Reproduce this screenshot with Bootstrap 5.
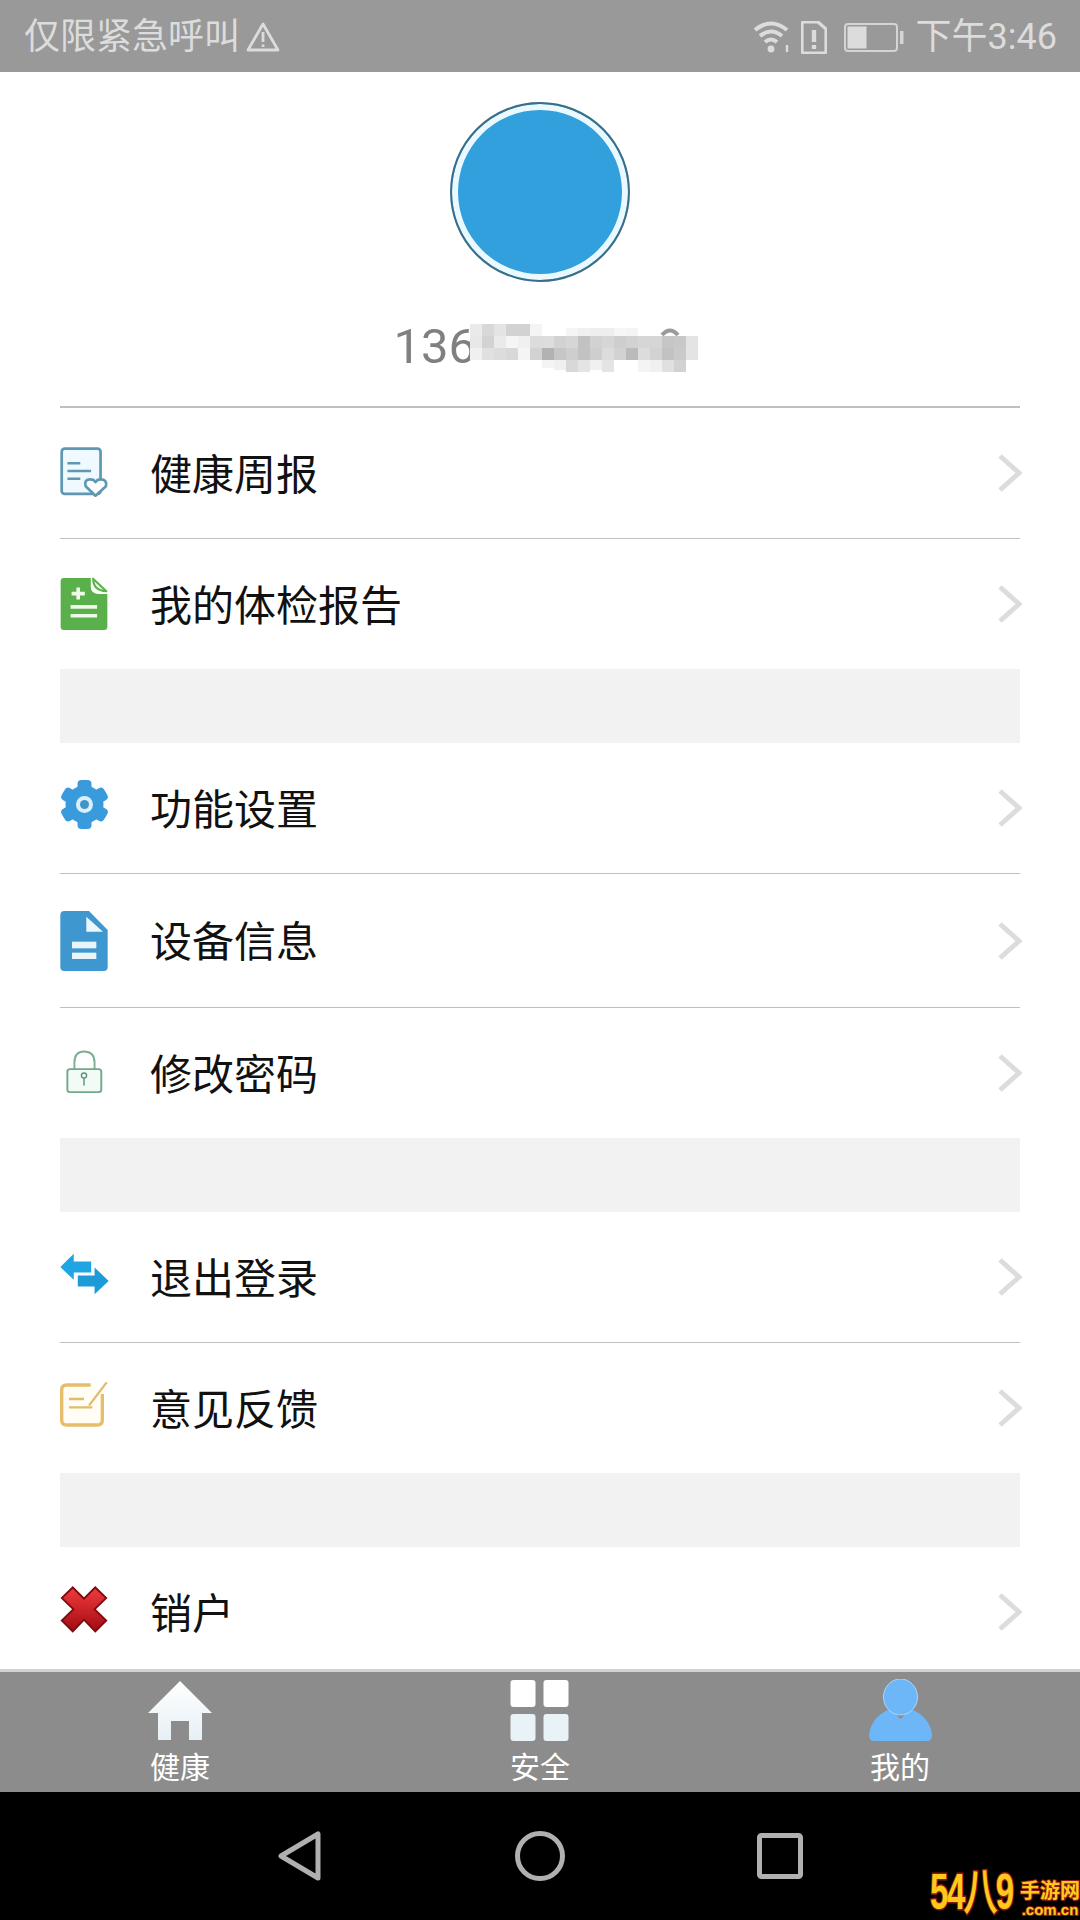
<!DOCTYPE html>
<html lang="zh-CN">
<head>
<meta charset="utf-8">
<title>我的</title>
<link href="https://cdn.jsdelivr.net/npm/bootstrap@5.3.0/dist/css/bootstrap.min.css" rel="stylesheet">
<style>
html,body{width:1080px;height:1920px;overflow:hidden}
body{font-family:Roboto,"Noto Sans CJK SC",sans-serif;background:#fff;color:#111}
.shell{height:1920px;position:relative}
.sysbar{height:72px;background:#999;color:#dcdcdc;font-size:36px;font-weight:400;padding:2px 23px 0 24px;flex:none;line-height:1}
.sysbar svg{display:block}
.warn{margin-left:6px}
.wifi{margin-right:9px}
.sim{margin-right:17px}
.batt{margin-right:12px}
.profile{height:334px;padding-top:30px;flex:none}
.avatar{width:180px;height:180px;border-radius:50%;background:#31a0dc;border:2px solid #3a6d88;box-shadow:inset 0 0 0 6px #e9f9ff}
.phone-box{width:303px;height:56px;margin:37px auto 0;position:relative;font-family:Roboto,sans-serif;font-size:49px;line-height:56px;color:#808080;left:5px}
.mosaic{position:absolute;left:76px;top:5px}
.menu{margin:0 60px;flex:1 1 auto;border-top:2px solid #c0c0c0}
.item{background:transparent;border:0;border-bottom:2px solid #c0c0c0;padding:0;height:131px;font-size:42px;color:#111;line-height:1;border-radius:0}
.item-end{border-bottom:0;height:130px}
.item-wide{height:134px}
.item-last{height:122px;padding-top:8px}
.gap-band{height:74px;background:#f2f2f2}
.ico-slot{width:48px;margin-right:42px;flex:none}
.ico-slot svg{display:block;overflow:visible}
.up1{margin-bottom:3px}
.up2{margin-bottom:7px}
.up3{margin-bottom:10px}
.up4{margin-bottom:6px}
.label-t{padding-top:5px}
.chev{margin-left:auto;margin-right:-2px;flex:none}
.tabline{height:3px;background:#d2d2d2;flex:none}
.tabs{height:120px;background:#8c8c8c;color:#fff;font-size:30px;line-height:1;flex:none}
.tab-cell{width:360px;padding-top:7px}
.tab-ico{height:63px}
.tab-ico svg{display:block}
.tab-txt{margin-top:11px}
.navkeys{height:128px;background:#000;flex:none}
.nav-slot{width:240px}
.wm{position:absolute;right:0;bottom:2px;height:54px;color:#ffc91a;font-family:"Liberation Sans",sans-serif;font-weight:700;line-height:1}
.wm-box{width:90px;height:52px;overflow:visible}
.wm-big{display:inline-block;font-size:50px;line-height:52px;letter-spacing:-2px;transform:scaleX(.66);transform-origin:left center;white-space:nowrap;-webkit-text-stroke:3px #8a1a12;paint-order:stroke fill}
.wm-side{width:60px}
.wm-cn{font-family:"Noto Sans CJK SC",sans-serif;font-size:20px;line-height:22px;-webkit-text-stroke:2px #8a1a12;paint-order:stroke fill}
.wm-url{font-size:15px;line-height:17px;white-space:nowrap;-webkit-text-stroke:2px #8a1a12;paint-order:stroke fill}
</style>
</head>
<body>
<div class="shell d-flex flex-column">

  <div class="sysbar d-flex align-items-center">
    <span>仅限紧急呼叫</span>
    <svg class="warn" width="34" height="30" viewBox="0 0 34 30" fill="none" stroke="#dcdcdc" stroke-width="2.8"><path d="M17 2 L32 28 H2 Z" stroke-linejoin="round"/><path d="M17 10V20M17 22.5V25"/></svg>
    <div class="ms-auto d-flex align-items-center">
      <svg class="wifi" width="38" height="33" viewBox="0 0 38 33" fill="none" stroke="#dcdcdc" stroke-width="4"><path d="M1 9 Q17 -4 33 9"/><path d="M6 15 Q17 6 28 15"/><path d="M11 21 Q17 16 23 21"/><circle cx="17" cy="28" r="3.4" fill="#dcdcdc" stroke="none"/><path d="M33 24V31" stroke-width="2.4"/></svg>
      <svg class="sim" width="26" height="33" viewBox="0 0 26 33"><path d="M3 1 H17 L25 8 V30 Q25 32 23 32 H3 Q1 32 1 30 V3 Q1 1 3 1Z" fill="none" stroke="#dcdcdc" stroke-width="3.2"/><path d="M13 9V21M13 24V28" stroke="#dcdcdc" stroke-width="4.4"/></svg>
      <svg class="batt" width="60" height="29" viewBox="0 0 60 29"><rect x="1" y="1" width="52" height="27" rx="3" fill="none" stroke="#d4d4d4" stroke-width="2"/><rect x="3.5" y="3.5" width="19" height="22" fill="#dcdcdc"/><rect x="56" y="8" width="3.5" height="13" fill="#d4d4d4"/></svg>
      <span>下午3:46</span>
    </div>
  </div>

  <section class="profile text-center">
    <div class="avatar mx-auto"></div>
    <div class="phone-box text-start">136
      <svg class="mosaic" width="228" height="48" viewBox="0 0 228 48">
        <g shape-rendering="crispEdges">
        <rect x="0" y="0" width="12" height="12" fill="#eaeaea"/><rect x="12" y="0" width="12" height="12" fill="#d8d8d8"/><rect x="24" y="0" width="12" height="12" fill="#e4e4e4"/><rect x="36" y="0" width="12" height="12" fill="#d2d2d2"/><rect x="48" y="0" width="12" height="12" fill="#d2d2d2"/><rect x="60" y="0" width="12" height="12" fill="#f4f4f4"/><rect x="96" y="4" width="12" height="8" fill="#f5f5f5"/><rect x="108" y="4" width="12" height="8" fill="#f0f0f0"/><rect x="120" y="4" width="12" height="8" fill="#eeeeee"/><rect x="132" y="4" width="12" height="8" fill="#eeeeee"/><rect x="144" y="4" width="12" height="8" fill="#f6f6f6"/><rect x="156" y="4" width="12" height="8" fill="#f4f4f4"/>
        <rect x="0" y="12" width="12" height="12" fill="#e8e8e8"/><rect x="12" y="12" width="12" height="12" fill="#d2d2d2"/><rect x="24" y="12" width="12" height="12" fill="#eaeaea"/><rect x="36" y="12" width="12" height="12" fill="#f5f5f5"/><rect x="48" y="12" width="12" height="12" fill="#f0f0f0"/><rect x="60" y="12" width="12" height="12" fill="#dcdcdc"/><rect x="72" y="12" width="12" height="12" fill="#dddddd"/><rect x="84" y="12" width="12" height="12" fill="#d2d2d2"/><rect x="96" y="12" width="12" height="12" fill="#d6d6d6"/><rect x="108" y="12" width="12" height="12" fill="#c2c2c2"/><rect x="120" y="12" width="12" height="12" fill="#d2d2d2"/><rect x="132" y="12" width="12" height="12" fill="#d6d6d6"/><rect x="144" y="12" width="12" height="12" fill="#cecece"/><rect x="156" y="12" width="12" height="12" fill="#d2d2d2"/><rect x="168" y="12" width="12" height="12" fill="#d6d6d6"/><rect x="180" y="12" width="12" height="12" fill="#d6d6d6"/><rect x="192" y="12" width="12" height="12" fill="#c6c6c6"/><rect x="204" y="12" width="12" height="12" fill="#c8c8c8"/><rect x="216" y="12" width="12" height="12" fill="#e4e4e4"/>
        <rect x="0" y="24" width="12" height="12" fill="#f0f0f0"/><rect x="12" y="24" width="12" height="12" fill="#e0e0e0"/><rect x="24" y="24" width="12" height="12" fill="#dcdcdc"/><rect x="36" y="24" width="12" height="12" fill="#d8d8d8"/><rect x="48" y="24" width="12" height="12" fill="#f5f5f5"/><rect x="60" y="24" width="12" height="12" fill="#d2d2d2"/><rect x="72" y="24" width="12" height="12" fill="#b2b2b2"/><rect x="84" y="24" width="12" height="12" fill="#c6c6c6"/><rect x="96" y="24" width="12" height="12" fill="#cecece"/><rect x="108" y="24" width="12" height="12" fill="#c2c2c2"/><rect x="120" y="24" width="12" height="12" fill="#cecece"/><rect x="132" y="24" width="12" height="12" fill="#dcdcdc"/><rect x="144" y="24" width="12" height="12" fill="#d2d2d2"/><rect x="156" y="24" width="12" height="12" fill="#bababa"/><rect x="168" y="24" width="12" height="12" fill="#dcdcdc"/><rect x="180" y="24" width="12" height="12" fill="#d2d2d2"/><rect x="192" y="24" width="12" height="12" fill="#c2c2c2"/><rect x="204" y="24" width="12" height="12" fill="#cacaca"/><rect x="216" y="24" width="12" height="12" fill="#e4e4e4"/>
        <rect x="72" y="36" width="12" height="8" fill="#f4f4f4"/><rect x="84" y="36" width="12" height="10" fill="#f0f0f0"/><rect x="96" y="36" width="12" height="12" fill="#d8d8d8"/><rect x="108" y="36" width="12" height="12" fill="#e4e4e4"/><rect x="120" y="36" width="12" height="10" fill="#f0f0f0"/><rect x="132" y="36" width="12" height="12" fill="#e4e4e4"/><rect x="168" y="36" width="12" height="12" fill="#f4f4f4"/><rect x="180" y="36" width="12" height="12" fill="#f0f0f0"/><rect x="192" y="36" width="12" height="12" fill="#e0e0e0"/><rect x="204" y="36" width="12" height="12" fill="#d2d2d2"/>
        </g>
        <path d="M192 11 Q200 2 208 11" fill="none" stroke="#9a9a9a" stroke-width="4"/>
      </svg>
    </div>
  </section>

  <div class="menu">
    <div class="list-group list-group-flush">
      <div class="list-group-item item d-flex align-items-center">
        <div class="ico-slot"><svg class="up1" width="48" height="49" viewBox="60 74 142 145"><rect x="65" y="79" width="115" height="134" rx="9" fill="#eefaff" stroke="#6098b4" stroke-width="8"/><path d="M82 122H120M82 145H152M82 168H120" stroke="#6098b0" stroke-width="7" fill="none"/><path d="M165 218 L136 190 Q130 170 150 170 Q160 170 165 178 Q170 170 180 170 Q200 170 196 190Z" fill="#fff" stroke="#6098b4" stroke-width="8" stroke-linejoin="round"/></svg></div>
        <span class="label-t">健康周报</span>
        <svg class="chev" width="24" height="38" viewBox="0 0 24 38" fill="none" stroke="#dcdcdc" stroke-width="5"><path d="M2 2 L21 19 L2 36"/></svg>
      </div>
      <div class="list-group-item item item-end d-flex align-items-center">
        <div class="ico-slot"><svg width="48" height="52" viewBox="62 468 141 157"><path d="M72 468H153 V495 Q153 516 178 516 H203 V615 Q203 625 193 625 H72 Q62 625 62 615 V478 Q62 468 72 468Z" fill="#5ab04a"/><path d="M160 470 Q160 505 200 508 Z" fill="#e9f7e0" stroke="#5ab04a" stroke-width="6" stroke-linejoin="round"/><path d="M115 497V533M95 515H135M92 555H172M92 582H172" stroke="#eef9e8" stroke-width="11" fill="none"/></svg></div>
        <span class="label-t">我的体检报告</span>
        <svg class="chev" width="24" height="38" viewBox="0 0 24 38" fill="none" stroke="#dcdcdc" stroke-width="5"><path d="M2 2 L21 19 L2 36"/></svg>
      </div>
    </div>
    <div class="gap-band"></div>
    <div class="list-group list-group-flush">
      <div class="list-group-item item d-flex align-items-center">
        <div class="ico-slot"><svg class="up2" width="49" height="49" viewBox="-24.5 -24.5 49 49"><g fill="#3a9bdc"><circle r="19"/><rect x="-7" y="-24.5" width="14" height="49" rx="4"/><rect x="-7" y="-24.5" width="14" height="49" rx="4" transform="rotate(60)"/><rect x="-7" y="-24.5" width="14" height="49" rx="4" transform="rotate(120)"/></g><circle r="8.5" fill="#dceef8"/><circle r="4.5" fill="#3f94c8"/></svg></div>
        <span class="label-t">功能设置</span>
        <svg class="chev" width="24" height="38" viewBox="0 0 24 38" fill="none" stroke="#dcdcdc" stroke-width="5"><path d="M2 2 L21 19 L2 36"/></svg>
      </div>
      <div class="list-group-item item item-wide d-flex align-items-center">
        <div class="ico-slot"><svg width="48" height="60" viewBox="62 453 142 180"><path d="M74 453H148 L204 510 V621 Q204 633 192 633 H74 Q62 633 62 621 V465 Q62 453 74 453Z" fill="#3f97d0"/><path d="M140 470V515H190Z" fill="#eaf7fd"/><rect x="97" y="545" width="73" height="20" fill="#e8f6fc"/><rect x="97" y="578" width="73" height="19" fill="#e8f6fc"/></svg></div>
        <span class="label-t">设备信息</span>
        <svg class="chev" width="24" height="38" viewBox="0 0 24 38" fill="none" stroke="#dcdcdc" stroke-width="5"><path d="M2 2 L21 19 L2 36"/></svg>
      </div>
      <div class="list-group-item item item-end d-flex align-items-center">
        <div class="ico-slot"><svg class="up1" width="48" height="44" viewBox="60 868 150 132"><path d="M105 925V905 Q105 870 135 870 Q168 870 168 905V925" fill="none" stroke="#7fae95" stroke-width="6"/><rect x="83" y="925" width="106" height="72" rx="8" fill="#f3fbf7" stroke="#72a88b" stroke-width="6"/><circle cx="135" cy="945" r="8" fill="none" stroke="#5f9479" stroke-width="4.5"/><path d="M135 953V976" stroke="#5f9479" stroke-width="4.5"/></svg></div>
        <span class="label-t">修改密码</span>
        <svg class="chev" width="24" height="38" viewBox="0 0 24 38" fill="none" stroke="#dcdcdc" stroke-width="5"><path d="M2 2 L21 19 L2 36"/></svg>
      </div>
    </div>
    <div class="gap-band"></div>
    <div class="list-group list-group-flush">
      <div class="list-group-item item d-flex align-items-center">
        <div class="ico-slot"><svg class="up2" width="49" height="42" viewBox="62 70 146 125"><path d="M63 112L103 72V95H155V128H103V150Z" fill="#1fa6e2"/><path d="M207 153L165 113V137H115V170H165V193Z" fill="#1c9bd8"/></svg></div>
        <span class="label-t">退出登录</span>
        <svg class="chev" width="24" height="38" viewBox="0 0 24 38" fill="none" stroke="#dcdcdc" stroke-width="5"><path d="M2 2 L21 19 L2 36"/></svg>
      </div>
      <div class="list-group-item item item-end d-flex align-items-center">
        <div class="ico-slot"><svg class="up3" width="48" height="47" viewBox="78 448 144 141"><path d="M170 463H98 Q83 463 83 478V568 Q83 583 98 583H190 Q205 583 205 568V490" fill="#fffdf4" stroke="#e6bd6a" stroke-width="10"/><path d="M105 505H150M105 530H175" stroke="#e3ba6e" stroke-width="7" fill="none"/><path d="M165 525L218 455" stroke="#e3ba6e" stroke-width="7" fill="none"/></svg></div>
        <span class="label-t">意见反馈</span>
        <svg class="chev" width="24" height="38" viewBox="0 0 24 38" fill="none" stroke="#dcdcdc" stroke-width="5"><path d="M2 2 L21 19 L2 36"/></svg>
      </div>
    </div>
    <div class="gap-band"></div>
    <div class="list-group list-group-flush">
      <div class="list-group-item item item-end item-last d-flex align-items-center">
        <div class="ico-slot"><svg class="up4" width="48" height="48" viewBox="62 1063 144 145"><defs><linearGradient id="redx" x1="0" y1="0" x2="0" y2="1"><stop offset="0" stop-color="#ee3a3c"/><stop offset="1" stop-color="#a50c14"/></linearGradient></defs><path d="M100 1066L134 1100L168 1066L205 1102L170 1136L205 1170L168 1207L134 1172L100 1207L63 1170L98 1136L63 1102Z" fill="#7d0a0e"/><path d="M100 1074L134 1108L168 1074L197 1102L162 1136L197 1170L168 1199L134 1164L100 1199L71 1170L106 1136L71 1102Z" fill="url(#redx)"/></svg></div>
        <span class="label-t">销户</span>
        <svg class="chev" width="24" height="38" viewBox="0 0 24 38" fill="none" stroke="#dcdcdc" stroke-width="5"><path d="M2 2 L21 19 L2 36"/></svg>
      </div>
    </div>
  </div>

  <div class="tabline"></div>
  <nav class="tabs d-flex justify-content-center">
    <div class="tab-cell d-flex flex-column align-items-center">
      <div class="tab-ico d-flex align-items-center"><svg width="64" height="59" viewBox="0 0 64 59"><defs><linearGradient id="hs" x1="0" y1="0" x2="0" y2="1"><stop offset="0" stop-color="#fff"/><stop offset="1" stop-color="#e6f0f5"/></linearGradient></defs><path d="M32 0 L64 32 H54 V59 H41 V40 H23 V59 H10 V32 H0Z" fill="url(#hs)"/></svg></div>
      <span class="tab-txt">健康</span>
    </div>
    <div class="tab-cell d-flex flex-column align-items-center">
      <div class="tab-ico d-flex align-items-center"><svg width="60" height="61" viewBox="0 0 60 61"><rect x="0.5" y="0" width="25" height="27" rx="3" fill="#fff"/><rect x="33.5" y="0" width="25" height="27" rx="3" fill="#fff"/><rect x="0.5" y="34" width="25" height="27" rx="3" fill="#e9f2f6"/><rect x="33.5" y="34" width="25" height="27" rx="3" fill="#e9f2f6"/></svg></div>
      <span class="tab-txt">安全</span>
    </div>
    <div class="tab-cell d-flex flex-column align-items-center">
      <div class="tab-ico d-flex align-items-center"><svg width="63" height="63" viewBox="0 0 63 63"><path d="M0 56 Q2 38 21 30 L31.5 40 L42 30 Q61 38 63 56 Q63 62 58 62 H5 Q0 62 0 56Z" fill="#6db6f8"/><ellipse cx="31.5" cy="18" rx="17" ry="18" fill="#6db6f8" stroke="#a9d6f7" stroke-width="1"/></svg></div>
      <span class="tab-txt">我的</span>
    </div>
  </nav>

  <div class="navkeys d-flex align-items-center justify-content-center">
    <div class="nav-slot d-flex justify-content-center"><svg width="44" height="50" viewBox="0 0 44 50" fill="none" stroke="#b0b0b0" stroke-width="5" stroke-linejoin="round"><path d="M40 3V47L3 25Z"/></svg></div>
    <div class="nav-slot d-flex justify-content-center"><svg width="50" height="50" viewBox="0 0 50 50" fill="none" stroke="#b0b0b0" stroke-width="5"><circle cx="25" cy="25" r="22.5"/></svg></div>
    <div class="nav-slot d-flex justify-content-center"><svg width="46" height="46" viewBox="0 0 46 46" fill="none" stroke="#b0b0b0" stroke-width="5"><rect x="2.5" y="2.5" width="41" height="41" rx="2"/></svg></div>
  </div>

  <div class="wm d-flex align-items-end">
    <div class="wm-box"><span class="wm-big">54八9</span></div>
    <div class="wm-side d-flex flex-column align-items-center">
      <span class="wm-cn">手游网</span>
      <span class="wm-url">.com.cn</span>
    </div>
  </div>
</div>
</body>
</html>
